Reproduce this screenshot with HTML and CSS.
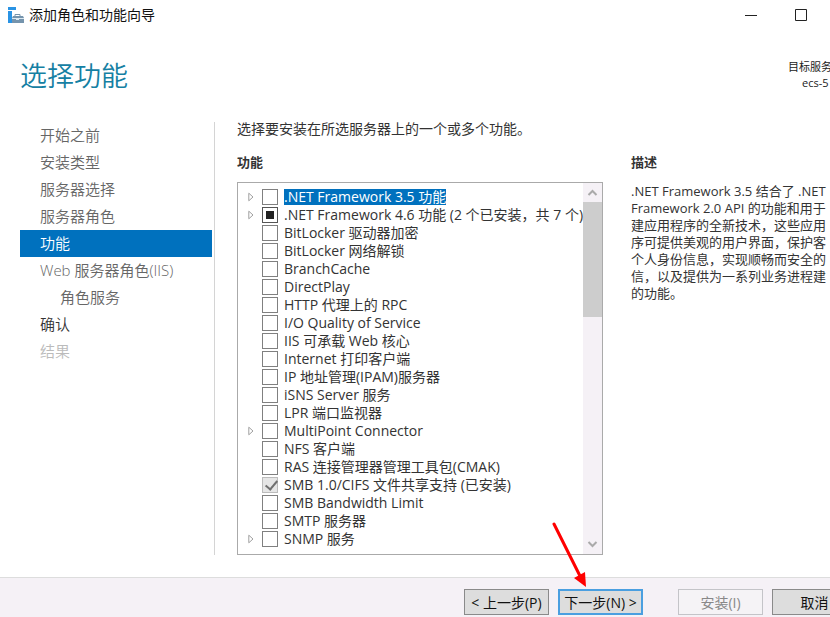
FILE: index.html
```html
<!DOCTYPE html>
<html lang="zh-CN">
<head>
	<meta charset="utf-8">
	<title>添加角色和功能向导</title>
	<link rel="stylesheet" href="styles.css">
</head>
<body>
	<svg class="symbols" aria-hidden="true">
		<symbol id="expander" viewBox="0 0 6 10"><path d="M.8 1.2v7.6L5 5z" fill="none" stroke="#a0a0a0"/></symbol>
	</svg>

	<header class="titlebar">
		<svg class="app-icon" viewBox="0 0 16 16">
			<path d="M0 0h8v3H0zM0 4h4v12H0z" fill="#2a93e4"/>
			<path d="M7 9V7.5h5V9" fill="none" stroke="#7594ad"/>
			<path d="M5 9h10l1 2v5H4v-5z" fill="#7594ad"/>
			<path d="M4 11.5h12" stroke="#dce8f0"/>
			<rect x="8" y="11" width="3" height="2" fill="#dce8f0"/>
		</svg>
		<span class="caption">添加角色和功能向导</span>
		<button class="window-button" aria-label="最小化"><svg viewBox="0 0 12 12"><path d="M0 6.5h12"/></svg></button>
		<button class="window-button" aria-label="最大化"><svg viewBox="0 0 12 12"><path d="M.5.5h11v11H.5z"/></svg></button>
	</header>

	<div class="page-header">
		<h1>选择功能</h1>
		<div class="target">
			<div>目标服务</div>
			<div class="host">ecs-5</div>
		</div>
	</div>

	<main class="content">
		<nav class="steps">
			<a href="#">开始之前</a>
			<a href="#">安装类型</a>
			<a href="#">服务器选择</a>
			<a href="#">服务器角色</a>
			<a href="#" class="current">功能</a>
			<a href="#">Web 服务器角色(IIS)</a>
			<a href="#" class="sub">角色服务</a>
			<a href="#" class="next">确认</a>
			<a href="#" class="disabled">结果</a>
		</nav>

		<section class="features">
			<p class="intro">选择要安装在所选服务器上的一个或多个功能。</p>
			<h2>功能</h2>
			<div class="list-box">
				<ul class="feature-list">
					<li><svg class="expander"><use href="#expander"/></svg><label><input type="checkbox"><span class="selected">.NET Framework 3.5 功能</span></label></li>
					<li><svg class="expander"><use href="#expander"/></svg><label><input type="checkbox" class="partial"><span>.NET Framework 4.6 功能 (2 个已安装，共 7 个)</span></label></li>
					<li><label><input type="checkbox"><span>BitLocker 驱动器加密</span></label></li>
					<li><label><input type="checkbox"><span>BitLocker 网络解锁</span></label></li>
					<li><label><input type="checkbox"><span>BranchCache</span></label></li>
					<li><label><input type="checkbox"><span>DirectPlay</span></label></li>
					<li><label><input type="checkbox"><span>HTTP 代理上的 RPC</span></label></li>
					<li><label><input type="checkbox"><span>I/O Quality of Service</span></label></li>
					<li><label><input type="checkbox"><span>IIS 可承载 Web 核心</span></label></li>
					<li><label><input type="checkbox"><span>Internet 打印客户端</span></label></li>
					<li><label><input type="checkbox"><span>IP 地址管理(IPAM)服务器</span></label></li>
					<li><label><input type="checkbox"><span>iSNS Server 服务</span></label></li>
					<li><label><input type="checkbox"><span>LPR 端口监视器</span></label></li>
					<li><svg class="expander"><use href="#expander"/></svg><label><input type="checkbox"><span>MultiPoint Connector</span></label></li>
					<li><label><input type="checkbox"><span>NFS 客户端</span></label></li>
					<li><label><input type="checkbox"><span>RAS 连接管理器管理工具包(CMAK)</span></label></li>
					<li><label><input type="checkbox" checked disabled><span>SMB 1.0/CIFS 文件共享支持 (已安装)</span></label></li>
					<li><label><input type="checkbox"><span>SMB Bandwidth Limit</span></label></li>
					<li><label><input type="checkbox"><span>SMTP 服务器</span></label></li>
					<li><svg class="expander"><use href="#expander"/></svg><label><input type="checkbox"><span>SNMP 服务</span></label></li>
				</ul>
				<div class="scrollbar">
					<svg viewBox="0 0 19 19"><path d="M5.5 12l4-4 4 4"/></svg>
					<div class="thumb"></div>
					<svg viewBox="0 0 19 19"><path d="M5.5 7l4 4 4-4"/></svg>
				</div>
			</div>
		</section>

		<section class="description">
			<h2>描述</h2>
			<p>.NET Framework 3.5 结合了 .NET<br>
			Framework 2.0 API 的功能和用于<br>
			建应用程序的全新技术，这些应用<br>
			序可提供美观的用户界面，保护客<br>
			个人身份信息，实现顺畅而安全的<br>
			信，以及提供为一系列业务进程建<br>
			的功能。</p>
		</section>
	</main>

	<footer class="buttons">
		<button>&lt; 上一步(P)</button>
		<div class="pointed">
			<button class="default">下一步(N) &gt;</button>
			<svg class="arrow" viewBox="0 0 40 66">
				<path d="M4 2l26 52" stroke="#f00" stroke-width="3" stroke-linecap="round"/>
				<path d="M24 56l11-6 1 15z" fill="#f00"/>
			</svg>
		</div>
		<button class="install" disabled>安装(I)</button>
		<button class="cancel">取消</button>
	</footer>
</body>
</html>
```
FILE: styles.css
```css
* { box-sizing: border-box; }
body, h1, h2, p, ul { margin: 0; padding: 0; }

body {
	display: flex;
	flex-direction: column;
	min-height: 100vh;
	overflow: hidden;
	background: #fff;
	color: #333;
	font: 13px/18px "Open Sans", "Noto Sans CJK SC", sans-serif;
}

.symbols { display: none; }

/* Title bar */

.titlebar { display: flex; align-items: center; height: 30px; padding-left: 8px; }
.app-icon { width: 16px; height: 16px; }
.caption { flex: 1; margin-left: 5px; font-size: 14px; color: #111; }
.window-button { width: 50px; height: 30px; padding: 0; border: 0; background: none; }
.window-button svg { display: block; width: 12px; height: 12px; margin: 0 auto; fill: none; stroke: #222; }
.window-button:last-child { margin-right: 4px; }

.page-header { display: flex; justify-content: space-between; height: 92px; padding: 26px 0 0 20px; }
h1 { font-size: 27px; font-weight: 350; line-height: 40px; color: #1580a3; }
.target { width: 42px; padding-top: 3px; overflow: hidden; font-size: 11px; line-height: 16px; white-space: nowrap; color: #222; }
.host { margin-left: 14px; }

.content { display: flex; flex: 1; padding-bottom: 22px; }

/* Wizard steps */

.steps { flex: 0 0 195px; margin-left: 20px; border-right: 1px solid #d4d4d4; }
.steps a { display: block; margin-right: 2px; padding-left: 20px; font-size: 15px; font-weight: 350; line-height: 27px; color: #666; text-decoration: none; }
.steps .current { background: #0071be; color: #fff; }
.steps .sub { padding-left: 40px; }
.steps .next { color: #333; }
.steps .disabled { color: #bbb; }

h2 { font-size: 13px; font-weight: 700; line-height: 18px; }

/* Feature list */

.features { display: flex; flex: 1; flex-direction: column; margin-left: 22px; }
.intro { margin: -3px 0 14px; font-size: 14px; line-height: 20px; }
.list-box { display: flex; flex: 1; margin-top: 11px; border: 1px solid #aaa; }
.feature-list { flex: 1; min-width: 0; padding: 5px 0; list-style: none; font-size: 14px; white-space: nowrap; }
.feature-list li { position: relative; height: 18px; padding-left: 24px; }
.feature-list label { display: flex; align-items: center; height: 18px; }
.feature-list span { margin-left: 6px; line-height: 16px; }
.feature-list .selected { background: #0071be; color: #fff; }
.expander { position: absolute; top: 4px; left: 10px; width: 6px; height: 10px; }

input { flex: none; width: 16px; height: 16px; margin: 0; border: 1px solid #808080; background: #fff; appearance: none; }
input.partial { border-color: #555; background: #222; background-clip: content-box; padding: 3px; }
input:disabled { border-color: #bbb; background: #e6e6e6; }
input:disabled::before { content: ""; display: block; width: 5px; height: 10px; margin: 0 0 0 5px; border: solid #707070; border-width: 0 2px 2px 0; transform: rotate(40deg); }

.scrollbar { display: flex; flex: 0 0 19px; flex-direction: column; background: #f5f1f6; }
.scrollbar svg { width: 19px; height: 19px; fill: none; stroke: #aaa; stroke-width: 2; }
.thumb { width: 19px; height: 115px; margin-bottom: auto; background: #cdcdcd; }

.description { flex: 0 0 199px; margin-left: 28px; padding-top: 31px; overflow: hidden; white-space: nowrap; }
.description p { margin-top: 12px; line-height: 17px; }

/* Footer */

.buttons { display: flex; justify-content: flex-end; gap: 9px; height: 40px; padding-top: 11px; border-top: 1px solid #ddd; background: #f5f1f6; }
.buttons button { width: 85px; height: 26px; padding: 1px 0 0; border: 1px solid #8a8a8a; background: #ddd; color: #111; font: inherit; font-size: 14px; line-height: 18px; white-space: nowrap; }
.buttons .default { border: 2px solid #4a9fe0; }
.buttons .install { margin-left: 26px; border-color: #c4c4c8; background: #f5f3f6; color: #888; }
.buttons .cancel { margin-right: -27px; }
.pointed { position: relative; }
.arrow { position: absolute; top: -67px; left: -8px; width: 40px; height: 66px; fill: none; }
```
